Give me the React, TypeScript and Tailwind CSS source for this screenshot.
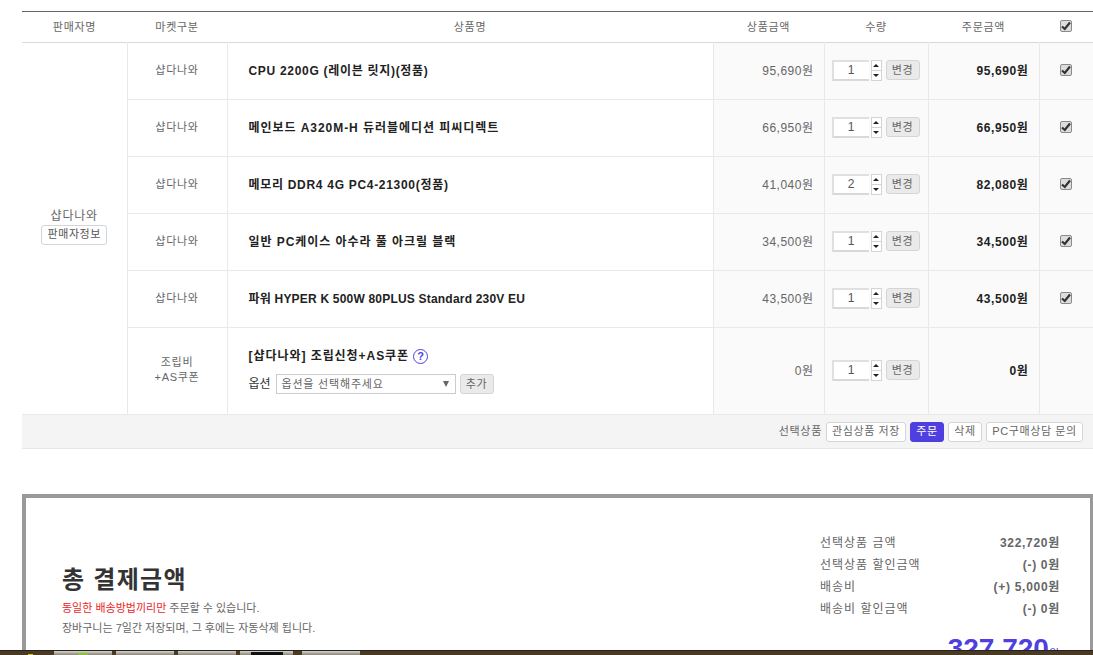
import React from 'react';

const rows = [
  { name: 'CPU 2200G (레이븐 릿지)(정품)', nameClass: 'tracking-[0.7px]', price: '95,690원', qty: 1, total: '95,690원' },
  { name: '메인보드 A320M-H 듀러블에디션 피씨디렉트', nameClass: 'tracking-[0.95px]', price: '66,950원', qty: 1, total: '66,950원' },
  { name: '메모리 DDR4 4G PC4-21300(정품)', nameClass: 'tracking-[0.7px]', price: '41,040원', qty: 2, total: '82,080원' },
  { name: '일반 PC케이스 아수라 풀 아크릴 블랙', nameClass: 'tracking-[0.95px]', price: '34,500원', qty: 1, total: '34,500원' },
  { name: '파워 HYPER K 500W 80PLUS Standard 230V EU', nameClass: 'tracking-[0.2px]', price: '43,500원', qty: 1, total: '43,500원' },
];

const summary = [
  { label: '선택상품 금액', value: '322,720원' },
  { label: '선택상품 할인금액', value: '(-) 0원' },
  { label: '배송비', value: '(+) 5,000원' },
  { label: '배송비 할인금액', value: '(-) 0원' },
];

function Check() {
  return (
    <span className="mx-auto flex h-[12px] w-[12px] items-center justify-center rounded-[2px] border border-[#8a8a8a] bg-[#dcdcdc]">
      <svg width="10" height="10" viewBox="0 0 10 10">
        <path d="M1 5.5 L3.8 8 L9 1.5" fill="none" stroke="#333" strokeWidth="2.2" />
      </svg>
    </span>
  );
}

function Btn({ children, className = 'border-[#d5d5d5]' }: { children: React.ReactNode; className?: string }) {
  return (
    <span className={`inline-flex h-[20px] items-center justify-center rounded-[3px] border tracking-[0.6px] ${className}`}>
      {children}
    </span>
  );
}

function Qty({ value }: { value: number }) {
  return (
    <div className="flex items-center pl-[7px]">
      <span className="flex h-[21px] w-[37px] items-center justify-center border-2 border-r-0 border-[#e0e0e0] border-b-[#d8d8d8] bg-white text-[12px] text-[#555]">
        {value}
      </span>
      <span className="ml-[2px] flex h-[21px] w-[11px] flex-col border border-[#d4d4d4] bg-white">
        <span className="flex flex-1 items-center justify-center border-b border-[#d4d4d4]">
          <span className="h-0 w-0 border-x-[3px] border-b-[3px] border-x-transparent border-b-[#222]" />
        </span>
        <span className="flex flex-1 items-center justify-center">
          <span className="h-0 w-0 border-x-[3px] border-t-[3px] border-x-transparent border-t-[#222]" />
        </span>
      </span>
      <Btn className="ml-[4px] w-[34px] border-[#d5d5d5] bg-[#eaeaea] text-[#666]">변경</Btn>
    </div>
  );
}

// controls sit 1px higher than the text in the same row
const cell = 'border-b border-l border-[#e9e9e9] align-middle';
const textCell = `${cell} pb-[1px]`;
const ctrlCell = `${cell} pb-[2px]`;

export default function App() {
  return (
    <div className="flex h-screen flex-col overflow-hidden bg-white font-['Liberation_Sans','Noto_Sans_CJK_KR',sans-serif] text-[11px] text-[#666]">
      <div className="min-h-0 flex-1 overflow-hidden pl-[22px] pt-[11px]">
        <table className="w-[1071px] table-fixed border-collapse border-t border-[#666]">
          <colgroup>
            <col className="w-[105px]" />
            <col className="w-[100px]" />
            <col className="w-[486px]" />
            <col className="w-[111px]" />
            <col className="w-[104px]" />
            <col className="w-[111px]" />
            <col className="w-[54px]" />
          </colgroup>
          <thead>
            <tr className="h-[31px] border-b border-[#d9d9d9] text-center tracking-[0.7px]">
              <th className="font-normal">판매자명</th>
              <th className="font-normal">마켓구분</th>
              <th className="font-normal">상품명</th>
              <th className="font-normal">상품금액</th>
              <th className="font-normal">수량</th>
              <th className="font-normal">주문금액</th>
              <th className="pb-[2px] font-normal"><Check /></th>
            </tr>
          </thead>
          <tbody>
            {rows.map((r, i) => (
              <tr key={r.name} className="h-[57px]">
                {i === 0 && (
                  <td rowSpan={6} className="border-b border-[#e9e9e9] pb-[6px] text-center align-middle">
                    <div className="text-[12px] tracking-[0.8px]">샵다나와</div>
                    <Btn className="w-[66px] border-[#d5d5d5] bg-white text-[#555]">판매자정보</Btn>
                  </td>
                )}
                <td className={`${textCell} text-center tracking-[0.7px]`}>샵다나와</td>
                <td className={`${textCell} pl-[21px] text-[12px] font-bold text-[#222] ${r.nameClass}`}>{r.name}</td>
                <td className={`${textCell} bg-[#fafafa] pr-[10px] text-right text-[12px] tracking-[0.5px]`}>{r.price}</td>
                <td className={`${ctrlCell} bg-[#fafafa]`}><Qty value={r.qty} /></td>
                <td className={`${textCell} bg-[#fafafa] pr-[10px] text-right text-[12px] font-bold tracking-[0.6px] text-[#222]`}>{r.total}</td>
                <td className={`${ctrlCell} bg-[#fafafa] text-center`}><Check /></td>
              </tr>
            ))}
            <tr className="h-[87px]">
              <td className={`${ctrlCell} text-center leading-[15px] tracking-[0.7px]`}>
                <div>조립비</div>
                <div>+AS쿠폰</div>
              </td>
              <td className={`${textCell} pl-[21px]`}>
                <div className="flex items-center gap-[4px] text-[12px] font-bold tracking-[0.95px] text-[#222]">
                  [샵다나와] 조립신청+AS쿠폰
                  <span className="flex h-[15px] w-[15px] items-center justify-center rounded-full border-[1.5px] border-[#4f3fe0] text-[11px] font-bold tracking-normal text-[#4f3fe0]">?</span>
                </div>
                <div className="mt-[9px] flex items-center text-[#333]">
                  <span className="w-[27px] text-[12px]">옵션</span>
                  <span className="flex h-[20px] w-[180px] items-center justify-between border border-[#ccc] bg-white pl-[5px] pr-[6px] tracking-[0.8px] text-[#666]">
                    옵션을 선택해주세요
                    <span className="h-0 w-0 border-x-[3px] border-t-[6px] border-x-transparent border-t-[#666]" />
                  </span>
                  <Btn className="ml-[4px] w-[34px] border-[#d5d5d5] bg-[#eaeaea] text-[#666]">추가</Btn>
                </div>
              </td>
              <td className={`${textCell} bg-[#fafafa] pr-[10px] text-right text-[12px] tracking-[0.5px]`}>0원</td>
              <td className={`${ctrlCell} bg-[#fafafa]`}><Qty value={1} /></td>
              <td className={`${textCell} bg-[#fafafa] pr-[10px] text-right text-[12px] font-bold tracking-[0.6px] text-[#222]`}>0원</td>
              <td className={`${cell} bg-[#fafafa]`} />
            </tr>
          </tbody>
        </table>

        <div className="flex h-[34px] w-[1071px] items-center justify-end gap-[4px] border-b border-[#e6e6e6] bg-[#f4f4f4] pr-[10px]">
          <span className="tracking-[0.7px]">선택상품</span>
          <Btn className="w-[80px] border-[#d5d5d5] bg-white">관심상품 저장</Btn>
          <Btn className="w-[34px] border-[#4f3fe0] bg-[#4f3fe0] text-white">주문</Btn>
          <Btn className="w-[34px] border-[#d5d5d5] bg-white">삭제</Btn>
          <Btn className="w-[97px] border-[#d5d5d5] bg-white">PC구매상담 문의</Btn>
        </div>

        <div className="mt-[45px] flex h-[200px] w-[1072px] border-4 border-[#999] bg-white">
          <div className="flex-1 pl-[36px] pt-[67px]">
            <div className="text-[24px] font-bold leading-[30px] tracking-[1.3px] text-[#333]">총 결제금액</div>
            <div className="mt-[3px] leading-[20px]">
              <div><span className="text-[#ee1c25]">동일한 배송방법끼리만</span> 주문할 수 있습니다.</div>
              <div>장바구니는 7일간 저장되며, 그 후에는 자동삭제 됩니다.</div>
            </div>
          </div>
          <div className="w-[270px] pr-[30px] pt-[34px] text-[12px]">
            {summary.map((s) => (
              <div key={s.label} className="flex h-[22px] items-center justify-between">
                <span className="tracking-[1px]">{s.label}</span>
                <span className="font-bold tracking-[0.7px]">{s.value}</span>
              </div>
            ))}
            <div className="mt-[14px] pr-[1px] text-right text-[#4f3fe0]">
              <span className="text-[28px] font-bold leading-[30px]">327,720</span>
              <span className="text-[11px]">원</span>
            </div>
          </div>
        </div>
      </div>

      <div className="flex h-[5px] shrink-0 items-stretch border-t border-[#222] bg-[#4a3a22]">
        <span className="ml-[28px] mt-[3px] w-[5px] bg-[#d8c23a]" />
        <span className="ml-[21px] flex w-[58px] items-end justify-center bg-gradient-to-b from-[#d8d5cc] to-[#8a8578]">
          <span className="h-[2px] w-[10px] bg-[#8fbf3f]" />
        </span>
        <span className="ml-[4px] w-[58px] bg-gradient-to-b from-[#d8d5cc] to-[#8a8578]" />
        <span className="ml-[4px] w-[58px] bg-gradient-to-b from-[#d8d5cc] to-[#8a8578]" />
        <span className="ml-[4px] flex w-[53px] items-end justify-center bg-gradient-to-b from-[#d8d5cc] to-[#8a8578]">
          <span className="h-[3px] w-[32px] bg-[#111]" />
        </span>
        <span className="ml-[9px] w-[58px] bg-gradient-to-b from-[#d8d5cc] to-[#8a8578]" />
      </div>
    </div>
  );
}
